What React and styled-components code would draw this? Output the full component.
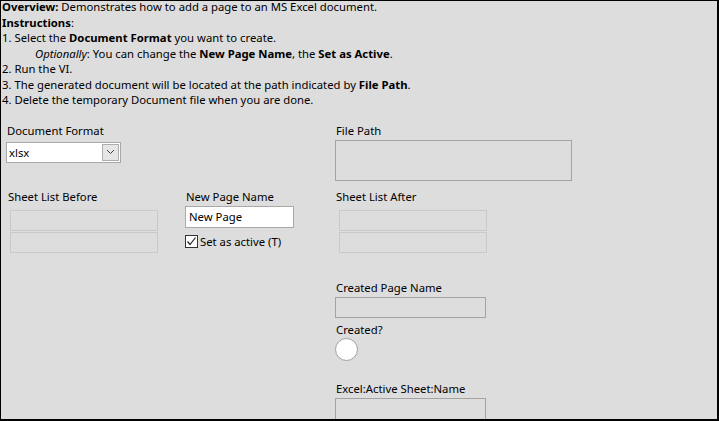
import React from 'react';
import styled, { createGlobalStyle } from 'styled-components';

const GlobalStyle = createGlobalStyle`
	body {
		margin: 0;
		font-family: "Noto Sans", "Open Sans", sans-serif;
		font-size: 11.3px;
		color: #000;
	}
`;

const Panel = styled.div`
	width: 719px;
	height: 421px;
	box-sizing: border-box;
	border-style: solid;
	border-color: #000;
	border-width: 1px 2px 2px 1px;
	background: #dddddd;
	overflow: hidden;
`;

const Notes = styled.div`
	margin: -2px 0 0 1px;
	line-height: 15.5px;
	& p {
		margin: 0;
	}
`;

const Indent = styled.p`
	padding-left: 33px;
`;

const Controls = styled.div`
	display: flex;
	padding: 16px 0 0 5px;
`;

const Column = styled.div`
	display: flex;
	flex-direction: column;
	align-items: flex-start;
	width: ${(p) => p.width || 'auto'};
	padding-top: ${(p) => p.top || 0}px;
`;

const Label = styled.div`
	line-height: 14px;
	margin-left: ${(p) => p.indent || 0}px;
	margin-top: ${(p) => p.top || 0}px;
	margin-bottom: ${(p) => p.gap ?? 2}px;
`;

const Select = styled.div`
	display: flex;
	justify-content: space-between;
	align-items: center;
	width: 115px;
	height: 21px;
	box-sizing: border-box;
	border: 1px solid #a9a9a9;
	background: #fff;
	padding: 0 1px 0 2px;
`;

const ArrowButton = styled.div`
	display: flex;
	align-items: center;
	justify-content: center;
	width: 17px;
	height: 17px;
	box-sizing: border-box;
	border: 1px solid #adadad;
	background: #e6e6e6;
`;

const Indicator = styled.div`
	width: ${(p) => p.width}px;
	height: ${(p) => p.height}px;
	box-sizing: border-box;
	border: 1px solid #a3a3a3;
	background: #dddddd;
`;

const ListBox = styled.div`
	display: flex;
	flex-direction: column;
	gap: 1px;
	margin-left: ${(p) => p.indent || 0}px;
`;

const ListRow = styled.div`
	width: 148px;
	height: 21px;
	box-sizing: border-box;
	border: 1px solid #c9c9c9;
	background: #dddddd;
`;

const TextInput = styled.div`
	width: 109px;
	height: 22px;
	box-sizing: border-box;
	border: 1px solid #a9a9a9;
	background: #fff;
	padding-left: 3px;
	line-height: 20px;
`;

const Check = styled.label`
	display: flex;
	align-items: center;
	gap: 2px;
	margin-top: 7px;
	line-height: 14px;
`;

const Box = styled.span`
	display: flex;
	width: 13px;
	height: 13px;
	box-sizing: border-box;
	border: 1px solid #333;
	background: #fff;
`;

const Led = styled.div`
	width: 23px;
	height: 23px;
	box-sizing: border-box;
	border-radius: 50%;
	border: 1px solid #a0a0a0;
	background: #fff;
`;

const Chevron = () => (
	<svg width="9" height="6" viewBox="0 0 9 6">
		<path d="M1 1 L4.5 4.5 L8 1" fill="none" stroke="#444" strokeWidth="1" />
	</svg>
);

const App = () => (
	<Panel>
		<GlobalStyle />
		<Notes>
			<p><b>Overview:</b> Demonstrates how to add a page to an MS Excel document.</p>
			<p><b>Instructions</b>:</p>
			<p>1. Select the <b>Document Format</b> you want to create.</p>
			<Indent><i>Optionally</i>: You can change the <b>New Page Name</b>, the <b>Set as Active</b>.</Indent>
			<p>2. Run the VI.</p>
			<p>3. The generated document will be located at the path indicated by <b>File Path</b>.</p>
			<p>4. Delete the temporary Document file when you are done.</p>
		</Notes>

		<Controls>
			<Column width="179px">
				<Label indent={1} gap={4}>Document Format</Label>
				<Select>
					<span>xlsx</span>
					<ArrowButton><Chevron /></ArrowButton>
				</Select>
				<Label indent={2} top={27} gap={6}>Sheet List Before</Label>
				<ListBox indent={4}>
					<ListRow />
					<ListRow />
				</ListBox>
			</Column>

			<Column width="150px" top={66}>
				<Label indent={1}>New Page Name</Label>
				<TextInput>New Page</TextInput>
				<Check>
					<Box>
						<svg width="11" height="11" viewBox="0 0 11 11">
							<path d="M1.5 5.5 L4 8.5 L9.5 1.5" fill="none" stroke="#222" strokeWidth="1.2" />
						</svg>
					</Box>
					Set as active (T)
				</Check>
			</Column>

			<Column>
				<Label indent={1}>File Path</Label>
				<Indicator width={237} height={41} />
				<Label indent={1} top={9} gap={6}>Sheet List After</Label>
				<ListBox indent={4}>
					<ListRow />
					<ListRow />
				</ListBox>
				<Label indent={1} top={28}>Created Page Name</Label>
				<Indicator width={151} height={21} />
				<Label indent={1} top={5} gap={1}>Created?</Label>
				<Led />
				<Label indent={1} top={21}>Excel:Active Sheet:Name</Label>
				<Indicator width={151} height={30} />
			</Column>
		</Controls>
	</Panel>
);

export default App;
